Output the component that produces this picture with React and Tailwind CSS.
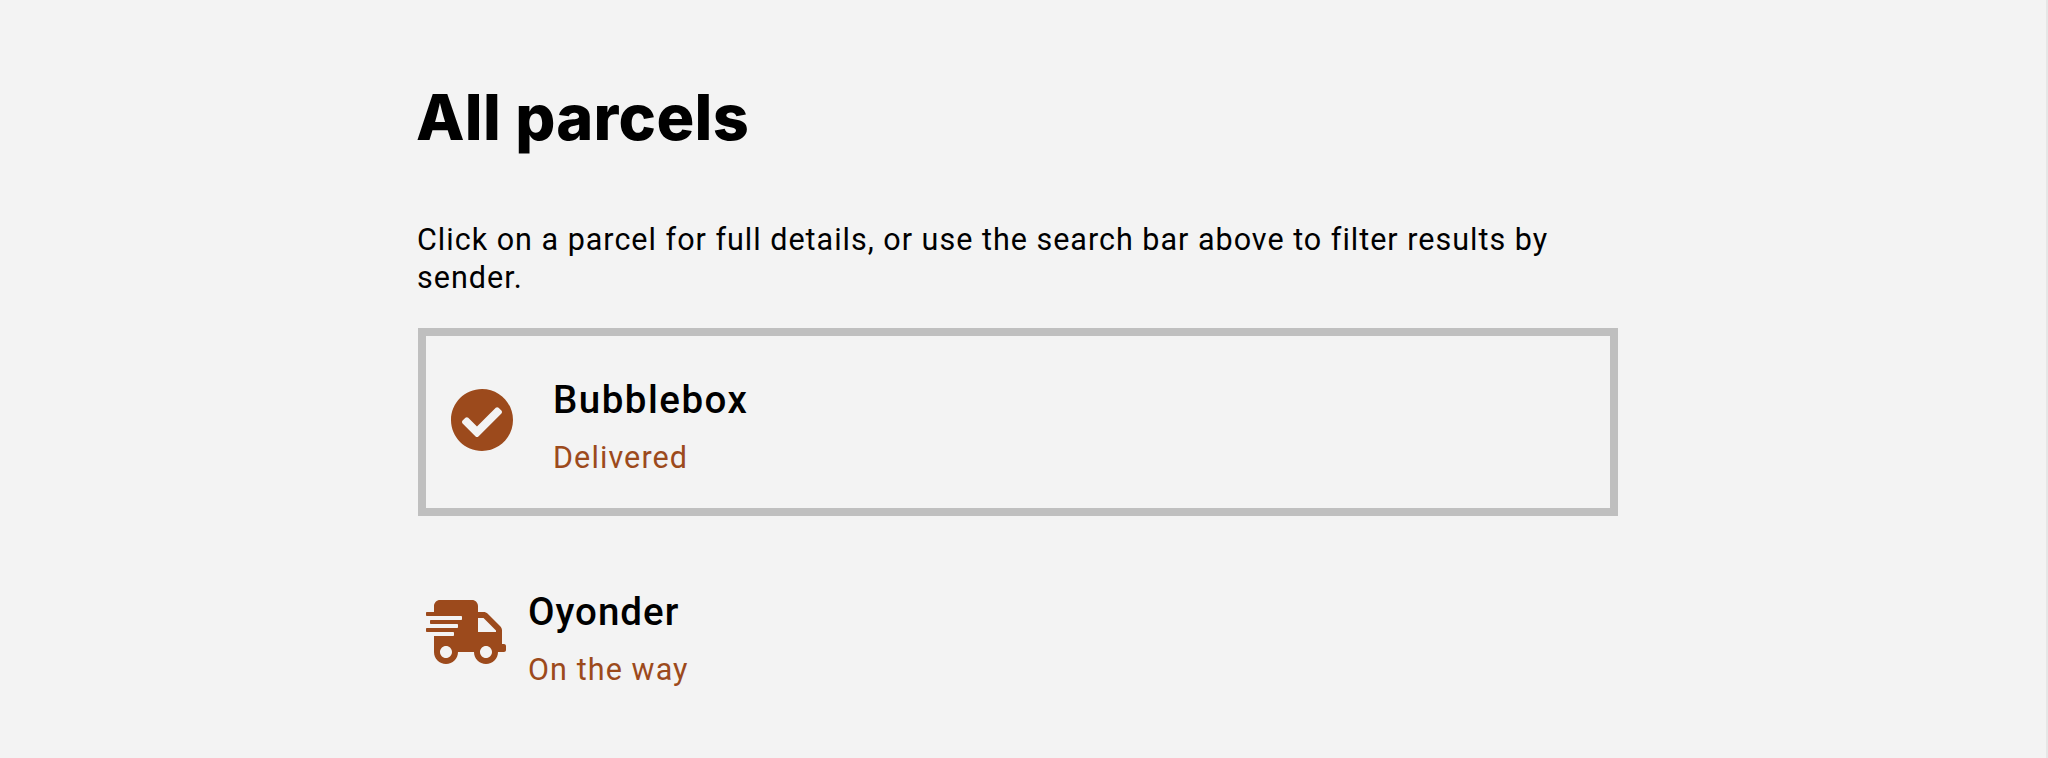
import { FaCheckCircle, FaShippingFast } from "react-icons/fa";

function ParcelText({ name, status, nameClass, statusClass }) {
  return (
    <div className="flex flex-col items-start font-['Roboto','Liberation_Sans',sans-serif]">
      <h2 className={`text-[38.5px] leading-[48px] font-medium text-black whitespace-nowrap ${nameClass}`}>{name}</h2>
      <p className={`mt-[15px] text-[30.5px] leading-[38px] whitespace-nowrap ${statusClass}`}>{status}</p>
    </div>
  );
}

export default function App() {
  return (
    <div className="flex h-[758px] w-full justify-between overflow-hidden border-r-2 border-[#e6e6e6] bg-[#f3f3f3] text-black">
      <main className="ml-[418px] flex w-[1200px] flex-col">
        <h1 className="mt-[79px] -ml-0.5 h-[76px] font-['Inter',sans-serif] text-[63px] leading-[76px] font-extrabold tracking-[0.3px] whitespace-nowrap">
          All parcels
        </h1>
        <p className="mt-[66px] h-[76px] -ml-px font-['Roboto','Liberation_Sans',sans-serif] text-[30.5px] leading-[38px] tracking-[1px] whitespace-nowrap">
          Click on a parcel for full details, or use the search bar above to filter results by
          <br />
          sender.
        </p>
        <ul className="mt-[31px] flex flex-col text-[#9c4a1c]">
          <li className="flex h-[188px] items-start border-8 border-[#bfbfbf] pl-6">
            <FaCheckCircle className="mt-[52px] size-16 shrink-0" />
            <div className="mt-10 ml-[39px]">
              <ParcelText name="Bubblebox" status="Delivered" nameClass="tracking-[1.5px]" statusClass="tracking-[1.1px]" />
            </div>
          </li>
          <li className="mt-[71px] flex items-start pl-2">
            <FaShippingFast className="mt-[13px] h-16 w-20 shrink-0" />
            <div className="mt-px ml-[22px]">
              <ParcelText name="Oyonder" status="On the way" nameClass="tracking-[1px]" statusClass="tracking-[1.1px]" />
            </div>
          </li>
        </ul>
      </main>
    </div>
  );
}
